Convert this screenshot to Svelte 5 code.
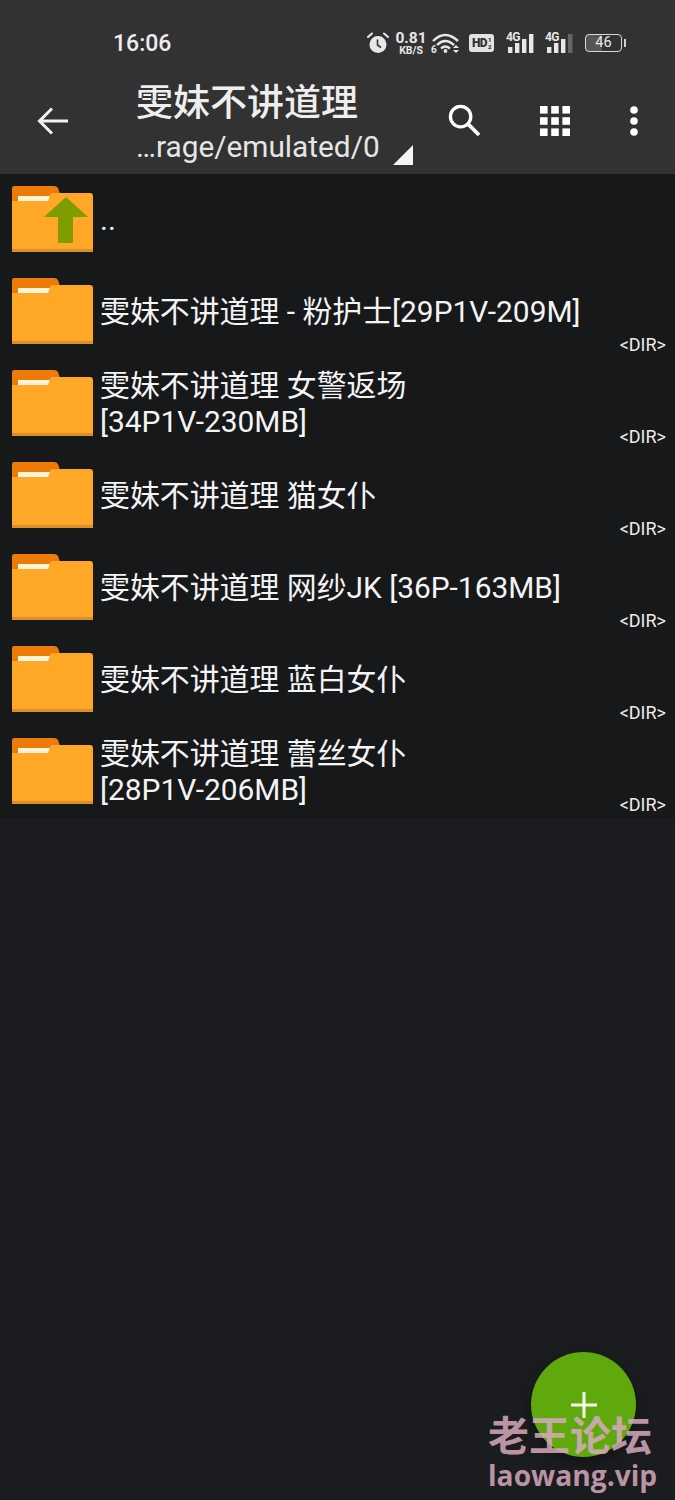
<script>
  const rows = [
    { name: '雯妹不讲道理 - 粉护士', tail: '[29P1V-209M]' },
    { name: '雯妹不讲道理 女警返场 ', tail: '[34P1V-230MB]' },
    { name: '雯妹不讲道理 猫女仆', tail: '' },
    { name: '雯妹不讲道理 网纱JK ', tail: '[36P-163MB]' },
    { name: '雯妹不讲道理 蓝白女仆', tail: '' },
    { name: '雯妹不讲道理 蕾丝女仆 ', tail: '[28P1V-206MB]' }
  ];
</script>

{#snippet folder(up)}
  <svg class="folder" viewBox="0 0 81 66" aria-hidden="true">
    <path d="M2 0H42Q45 0 46 2L48 8H0V2Q0 0 2 0Z" fill="#ee7a08" />
    <path d="M0 8H46V24H0Z" fill="#ee7a08" />
    <path d="M6 10H40L38 15H6Z" fill="#fff3d8" />
    <path d="M0 24V15H36L39 7H78Q81 7 81 10V66H0Z" fill="#ffa726" />
    <rect x="0" y="63" width="81" height="3" fill="#d9902a" />
    {#if up}
      <path d="M54 11L32 31H46V57H61V31H76Z" fill="#7f9c00" />
    {/if}
  </svg>
{/snippet}

{#snippet bars(last)}
  <svg viewBox="0 0 26 19" aria-hidden="true">
    <rect x="0" y="13" width="4.4" height="6" fill="#e8e8e8" />
    <rect x="7" y="9" width="4.4" height="10" fill="#e8e8e8" />
    <rect x="14" y="5" width="4.4" height="14" fill="#e8e8e8" />
    <rect x="21" y="0" width="4.4" height="19" fill={last} />
  </svg>
{/snippet}

<div class="page">
  <header>
    <div class="status">
      <span class="time">16:06</span>
      <div class="indicators">
        <svg class="alarm" viewBox="0 0 22 22" aria-hidden="true">
          <circle cx="11" cy="12.5" r="8.5" fill="#e8e8e8" />
          <path d="M1 5L5 1.5M21 5L17 1.5" stroke="#e8e8e8" stroke-width="2" stroke-linecap="round" />
          <path d="M10.5 7.5V13L14 15.5" stroke="#323232" stroke-width="1.6" fill="none" />
        </svg>
        <div class="speed"><b>0.81</b><i>KB/S</i></div>
        <svg class="wifi" viewBox="0 0 30 22" aria-hidden="true">
          <path d="M2 9Q14 -3 27 9M6 13Q14 5 23 13M10 16.5Q14 12.5 19 16.5" stroke="#e8e8e8" stroke-width="2.4" fill="none" />
          <circle cx="14.5" cy="19" r="1.9" fill="#e8e8e8" />
          <text x="0" y="21" font-size="10" font-weight="700" fill="#e8e8e8">6</text>
          <path d="M22 16L25 13L28 16ZM22 18H28L25 21Z" fill="#e8e8e8" />
        </svg>
        <div class="hd"><span>HD</span><small>1<br />2</small></div>
        <div class="sig">
          <span>4G</span>
          {@render bars('#e8e8e8')}
        </div>
        <div class="sig">
          <span>4G</span>
          {@render bars('#666')}
        </div>
        <div class="batt"><span class="cell">46</span><span class="nub"></span></div>
      </div>
    </div>
    <div class="bar">
      <svg class="back" viewBox="0 0 34 32" aria-hidden="true">
        <path d="M32 15H4M16 2.5L3.5 15L16 27.5" stroke="#f2f2f2" stroke-width="3" fill="none" />
      </svg>
      <div class="titles">
        <div class="title">雯妹不讲道理</div>
        <div class="path">…rage/emulated/0</div>
      </div>
      <svg class="corner" viewBox="0 0 20 20" aria-hidden="true"><path d="M20 0V20H0Z" fill="#f5f5f5" /></svg>
      <div class="actions">
        <svg class="search" viewBox="0 0 34 34" aria-hidden="true">
          <circle cx="13" cy="13" r="10.5" stroke="#fff" stroke-width="3.4" fill="none" />
          <path d="M20.5 20.5L32 32" stroke="#fff" stroke-width="3.8" />
        </svg>
        <svg class="grid" viewBox="0 0 30 30" aria-hidden="true">
          {#each [0, 11.2, 22.4] as y}
            {#each [0, 11.2, 22.4] as x}
              <rect {x} {y} width="7.6" height="7.6" fill="#fff" />
            {/each}
          {/each}
        </svg>
        <svg class="more" viewBox="0 0 8 30" aria-hidden="true">
          <circle cx="4" cy="4" r="3.8" fill="#fff" />
          <circle cx="4" cy="15" r="3.8" fill="#fff" />
          <circle cx="4" cy="26" r="3.8" fill="#fff" />
        </svg>
      </div>
    </div>
  </header>

  <ul class="list">
    <li class="row">
      {@render folder(true)}
      <span class="name">..</span>
    </li>
    {#each rows as r}
      <li class="row">
        {@render folder(false)}
        <span class="name">{r.name}<span class="tail">{r.tail}</span></span>
        <span class="dir">&lt;DIR&gt;</span>
      </li>
    {/each}
  </ul>

  <button class="fab" aria-label="add">
    <svg viewBox="0 0 26 26" aria-hidden="true"><path d="M13 0V26M0 13H26" stroke="#f6ffe8" stroke-width="3" /></svg>
  </button>

  <div class="mark">
    <div class="cn">老王论坛</div>
    <div class="en">laowang.vip</div>
  </div>
</div>

<style>
  :global(body) {
    margin: 0;
    background: #1a1c1f;
  }
  .page {
    position: relative;
    width: 675px;
    height: 1500px;
    overflow: hidden;
    background: #1a1c1f;
    color: #f2f2f2;
    font-family: Roboto, "Noto Sans CJK SC", sans-serif;
  }
  header {
    height: 174px;
    background: #323232;
    box-sizing: border-box;
  }
  .status {
    height: 72px;
    display: flex;
    align-items: center;
    padding: 14px 49px 0 113px;
    box-sizing: border-box;
    justify-content: space-between;
  }
  .time {
    font-size: 23px;
    font-weight: 500;
    color: #ededed;
  }
  .indicators {
    display: flex;
    align-items: center;
    color: #e8e8e8;
  }
  .alarm {
    width: 22px;
    height: 22px;
    margin-right: 6px;
  }
  .speed {
    display: flex;
    flex-direction: column;
    align-items: center;
    line-height: 1;
    width: 32px;
    margin-right: 4px;
  }
  .speed b {
    font-size: 15.5px;
    font-weight: 700;
    line-height: 14px;
  }
  .speed i {
    font-style: normal;
    font-weight: 700;
    font-size: 10.5px;
    line-height: 11px;
  }
  .wifi {
    width: 30px;
    height: 22px;
    margin-right: 8px;
  }
  .hd {
    display: flex;
    align-items: center;
    background: #e2e2e2;
    color: #323232;
    border-radius: 3px;
    height: 18px;
    width: 25px;
    justify-content: center;
    font-size: 12px;
    font-weight: 900;
    margin-right: 12px;
    line-height: 1;
    letter-spacing: -0.5px;
  }
  .hd small {
    font-size: 6px;
    line-height: 7px;
    margin-left: 1px;
  }
  .sig {
    position: relative;
    width: 28px;
    height: 20px;
    margin-right: 11px;
  }
  .sig span {
    position: absolute;
    left: 0;
    top: -2px;
    font-size: 12px;
    line-height: 12px;
    font-weight: 700;
    letter-spacing: -0.6px;
  }
  .sig svg {
    position: absolute;
    left: 2px;
    top: 1px;
    width: 26px;
    height: 19px;
  }
  .batt {
    display: flex;
    align-items: center;
    margin-left: 1px;
  }
  .cell {
    width: 35px;
    height: 16px;
    border: 1.5px solid #d8d8d8;
    border-radius: 4px;
    font-size: 14.5px;
    line-height: 16px;
    text-align: center;
    background: linear-gradient(90deg, #555 0 46%, transparent 46%);
  }
  .nub {
    width: 2px;
    height: 8px;
    margin-left: 2px;
    background: #d0d0d0;
  }
  .bar {
    position: relative;
    display: flex;
    align-items: center;
    height: 102px;
    padding-left: 36px;
    box-sizing: border-box;
  }
  .back {
    width: 34px;
    height: 32px;
    margin-right: 66px;
    margin-bottom: 3px;
    flex: none;
  }
  .titles {
    flex: 1;
    align-self: flex-start;
  }
  .title {
    font-size: 37px;
    line-height: 46px;
    font-weight: 500;
    margin-top: 9px;
    color: #eeeeee;
  }
  .path {
    font-size: 29.8px;
    line-height: 36px;
    margin-top: 2px;
    color: #e6e6e6;
  }
  .corner {
    position: absolute;
    left: 393px;
    top: 73px;
    width: 20px;
    height: 20px;
  }
  .actions {
    display: flex;
    align-items: center;
    position: absolute;
    left: 448px;
    top: 32px;
  }
  .search {
    width: 33px;
    height: 33px;
    margin-right: 59px;
  }
  .grid {
    width: 30px;
    height: 30px;
    margin-right: 60px;
  }
  .more {
    width: 8px;
    height: 30px;
  }
  .list {
    list-style: none;
    margin: 0;
    padding: 0;
    background: #17181a;
    height: 644px;
  }
  .row {
    height: 92px;
    display: grid;
    grid-template-columns: 81px minmax(0, 1fr) auto;
    align-items: center;
    padding: 0 9px 0 12px;
    box-sizing: border-box;
    column-gap: 7px;
  }
  .folder {
    width: 81px;
    height: 66px;
    align-self: start;
    margin-top: 12px;
  }
  .name {
    font-size: 29.9px;
    line-height: 36px;
    max-width: 505px;
    color: #f4f4f4;
    grid-column: 2;
    padding-bottom: 1px;
  }
  .tail {
    white-space: nowrap;
  }
  .dir {
    font-size: 18px;
    line-height: 20px;
    align-self: end;
    margin-bottom: 3px;
    color: #ececec;
  }
  .fab {
    position: absolute;
    left: 531px;
    top: 1352px;
    width: 105px;
    height: 105px;
    border: 0;
    padding: 0;
    border-radius: 50%;
    background: #5fa80e;
    box-shadow: 0 6px 14px rgba(0, 0, 0, 0.35);
    display: flex;
    align-items: center;
    justify-content: center;
  }
  .fab svg {
    width: 26px;
    height: 26px;
  }
  .mark {
    position: absolute;
    left: 488px;
    top: 1411px;
    width: 172px;
    color: rgba(216, 170, 190, 0.85);
    font-weight: 700;
    font-family: "Noto Sans CJK SC", Roboto, sans-serif;
  }
  .cn {
    font-size: 41px;
    line-height: 44px;
    white-space: nowrap;
  }
  .en {
    font-family: "Open Sans", Roboto, sans-serif;
    font-size: 28.2px;
    line-height: 30px;
    margin-top: 5px;
    white-space: nowrap;
  }
</style>
